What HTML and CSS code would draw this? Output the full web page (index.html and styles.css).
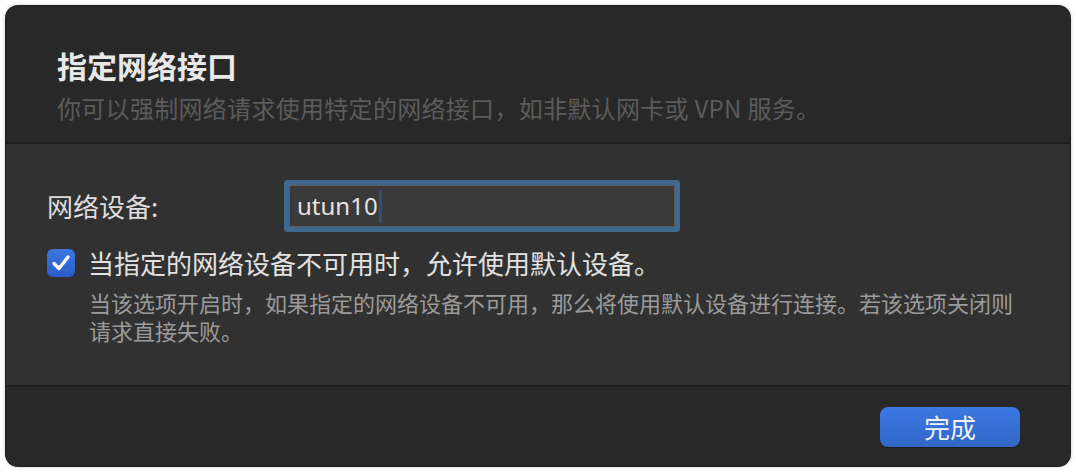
FILE: index.html
```html
<!DOCTYPE html>
<html lang="zh-CN">
<head>
<meta charset="utf-8">
<title>指定网络接口</title>
<link rel="stylesheet" href="styles.css">
</head>
<body>
<div class="dialog">
  <header class="head">
    <h1 class="title">指定网络接口</h1>
    <p class="subtitle">你可以强制网络请求使用特定的网络接口，如非默认网卡或 VPN 服务。</p>
  </header>
  <section class="body">
    <div class="field-row">
      <label class="field-label">网络设备:</label>
      <div class="input"><span class="input-text">utun10</span><span class="caret"></span></div>
    </div>
    <div class="check-row">
      <span class="checkbox">
        <svg width="20" height="18" viewBox="0 0 20 18"><path d="M3 9.5 L8 14.5 L17 3" fill="none" stroke="#fff" stroke-width="3.4" stroke-linecap="round" stroke-linejoin="round"/></svg>
      </span>
      <span class="check-label">当指定的网络设备不可用时，允许使用默认设备。</span>
    </div>
    <div class="desc">
      <p class="desc-line">当该选项开启时，如果指定的网络设备不可用，那么将使用默认设备进行连接。若该选项关闭则</p>
      <p class="desc-line">请求直接失败。</p>
    </div>
  </section>
  <footer class="foot">
    <button class="btn">完成</button>
  </footer>
</div>
</body>
</html>
```

FILE: styles.css
```css
* { box-sizing: border-box; }
html, body { margin: 0; padding: 0; background: #ffffff; }
body {
  font-family: "Noto Sans CJK SC", "Noto Sans", sans-serif;
  width: 1076px;
  height: 472px;
  overflow: hidden;
}
.dialog {
  margin: 6px;
  width: 1064px;
  height: 460px;
  border-radius: 12px;
  background: #282828;
  overflow: hidden;
  display: flex;
  flex-direction: column;
  box-shadow: 0 0 0 1px #1c1c1c, 0 0 4px 1px rgba(0,0,0,0.18);
}
.head {
  height: 138px;
  padding: 44px 0 0 51px;
  border-bottom: 2px solid #1d1d1d;
  background: #282828;
}
.title {
  margin: 0;
  font-size: 30px;
  line-height: 30px;
  font-weight: 700;
  color: #e8e8e8;
}
.subtitle {
  margin: 16px 0 0;
  font-size: 24px;
  line-height: 24px;
  letter-spacing: 0.3px;
  color: #5b5b5b;
}
.body {
  height: 243px;
  background: #313131;
  border-bottom: 2px solid #1f1f1f;
  padding: 41px 0 0 41px;
}
.field-row {
  display: flex;
  align-items: center;
  height: 42px;
}
.field-label {
  width: 242px;
  font-size: 26px;
  line-height: 26px;
  color: #dedede;
}
.input {
  width: 386px;
  height: 42px;
  background: #3a3a3a;
  border: 1px solid #5c5c5c;
  border-radius: 1px;
  box-shadow: 0 0 0 5px #40698f;
  display: flex;
  align-items: center;
  padding-left: 7px;
}
.input-text {
  font-family: "Noto Sans", "Noto Sans CJK SC", sans-serif;
  font-size: 24px;
  line-height: 30px;
  color: #e4e4e4;
}
.caret {
  width: 3px;
  height: 33px;
  background: #2f4f7c;
  margin-left: 1px;
}
.check-row {
  display: flex;
  align-items: center;
  margin-top: 21px;
  height: 30px;
}
.checkbox {
  width: 28px;
  height: 28px;
  border-radius: 6px;
  background: linear-gradient(#3a76e0, #2a5ccc);
  display: flex;
  align-items: center;
  justify-content: center;
  flex: none;
}
.check-label {
  margin-left: 13px;
  font-size: 26px;
  line-height: 26px;
  color: #e2e2e2;
}
.desc {
  margin: 10px 0 0 42px;
  color: #9b9b9b;
}
.desc-line {
  margin: 0;
  height: 28px;
  font-size: 22px;
  line-height: 28px;
}
.foot {
  flex: 1;
  display: flex;
  align-items: center;
  justify-content: flex-end;
  padding-right: 50px;
  background: #282828;
}
.btn {
  width: 140px;
  height: 40px;
  border: none;
  border-radius: 8px;
  background: linear-gradient(#3b78e2, #3266c8);
  color: #f2f2f2;
  font-family: "Noto Sans CJK SC", sans-serif;
  font-size: 26px;
  line-height: 40px;
  padding: 0;
  box-shadow: 0 1px 1px rgba(0,0,0,0.3);
}
```
